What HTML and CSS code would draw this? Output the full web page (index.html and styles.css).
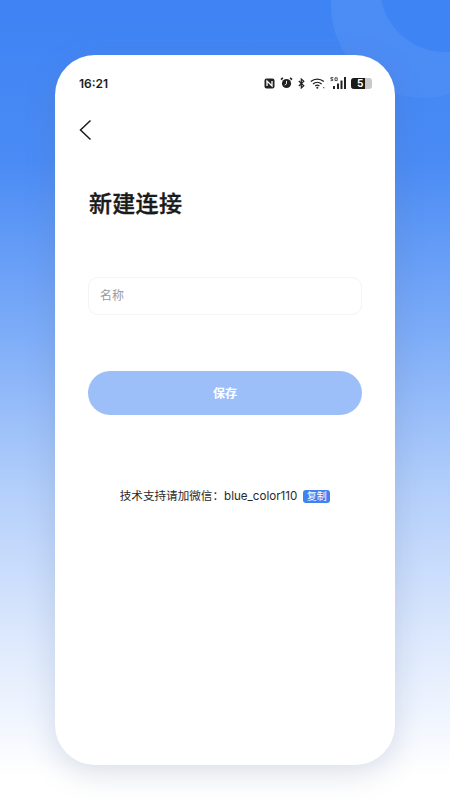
FILE: index.html
```html
<!DOCTYPE html>
<html lang="zh">
<head>
<meta charset="utf-8">
<title>新建连接</title>
<link rel="stylesheet" href="styles.css">
</head>
<body>
<div class="stage">
  <div class="ring-outer"></div>
  <div class="ring-inner"></div>
  <main class="phone">
    <header class="status">
      <span class="time">16:21</span>
      <div class="status-icons">
        <svg class="ic" width="11" height="11" viewBox="0 0 11 11"><rect x="0.5" y="0.5" width="10" height="10" rx="2" fill="#222"/><path d="M3 8V3l5 5V3" fill="none" stroke="#fff" stroke-width="1.3"/></svg>
        <svg class="ic" width="13" height="12" viewBox="0 0 13 12"><circle cx="6.5" cy="6.5" r="4.6" fill="#222"/><path d="M6.5 3.900v2.900l-1.800 1.200" fill="none" stroke="#fff" stroke-width=".9"/><path d="M1 2.600 2.900.8M12 2.600 10.100.8" stroke="#222" stroke-width="1.600"/></svg>
        <svg class="ic" width="7" height="11" viewBox="0 0 7 11"><path d="M.8 3 5.800 7.800 3.300 10V1L5.800 3.200.8 8" fill="none" stroke="#222" stroke-width="1.200"/></svg>
        <svg class="ic" width="15" height="11" viewBox="0 0 15 11"><path d="M.8 3.600C4.500.3 10 .3 13.800 3.600M3 5.900C5.500 3.800 9.100 3.800 11.600 5.900M5.200 8C6.500 7 8.100 7 9.400 8" fill="none" stroke="#222" stroke-width="1.300"/><circle cx="7.300" cy="9.700" r="1" fill="#222"/><circle cx="13.800" cy="9.700" r=".6" fill="#222"/></svg>
        <svg class="ic" width="16" height="12" viewBox="0 0 16 12"><rect x="3" y="9" width="2" height="3" fill="#222"/><rect x="7" y="6.500" width="2" height="5.500" fill="#222"/><rect x="10.500" y="3.500" width="2" height="8.500" fill="#222"/><rect x="14" y="0" width="2" height="12" fill="#222"/><path d="M3.300.6H.9v1.500h1.800v1.500H.7M5 .8h2.200v2.800H5z" fill="none" stroke="#222" stroke-width=".8"/></svg>
        <div class="battery"><div class="battery-fill"></div><span class="battery-num">5</span></div>
      </div>
    </header>
    <svg class="back" width="13" height="22" viewBox="0 0 13 22"><path d="M11.500 1.500 1.500 11l10 9.500" fill="none" stroke="#1c1c1c" stroke-width="1.500"/></svg>
    <h1 class="title">新建连接</h1>
    <div class="field">名称</div>
    <button class="save">保存</button>
    <p class="support">
      <span>技术支持请加微信：blue_color110</span>
      <span class="copy">复制</span>
    </p>
  </main>
</div>
</body>
</html>
```

FILE: styles.css
```css
* { box-sizing: border-box; }
html, body { margin: 0; padding: 0; }
body {
  width: 450px;
  height: 800px;
  overflow: hidden;
  font-family: Inter, "Noto Sans CJK SC", sans-serif;
}
.stage {
  position: relative;
  width: 450px;
  height: 800px;
  padding: 55px 55px 0;
  overflow: hidden;
  background: linear-gradient(180deg, #3e83f4 0%, #4a8bf5 20%, #7eadf8 42%, #b5d0fb 62%, #dde9fd 80%, #ffffff 97%);
}
.ring-outer {
  position: absolute;
  left: 331px;
  top: -88px;
  width: 186px;
  height: 186px;
  border-radius: 50%;
  background: #4c8cf5;
}
.ring-inner {
  position: absolute;
  left: 380px;
  top: -78px;
  width: 130px;
  height: 130px;
  border-radius: 50%;
  background: #3f84f4;
}
.phone {
  position: relative;
  display: flex;
  flex-direction: column;
  width: 340px;
  height: 710px;
  padding: 0 33px;
  background: #fff;
  border-radius: 40px;
  box-shadow: 0 8px 30px rgba(90, 110, 150, 0.22);
}
.status {
  display: flex;
  align-items: center;
  justify-content: space-between;
  height: 14px;
  margin: 21px -10px 0 -9px;
}
.time {
  font-size: 12px;
  font-weight: 600;
  color: #1c1c1c;
}
.status-icons {
  display: flex;
  align-items: center;
  gap: 5px;
}
.ic { display: block; }
.battery {
  position: relative;
  width: 21px;
  height: 11px;
  background: #c9c9c9;
  border-radius: 3px;
  overflow: hidden;
}
.battery-fill {
  width: 14px;
  height: 11px;
  background: #1a1a1a;
}
.battery-num {
  position: absolute;
  left: 6px;
  top: 0;
  font-size: 10px;
  line-height: 11px;
  font-weight: 700;
  color: #fff;
}
.back {
  display: block;
  margin: 29px 0 0 -9px;
}
.title {
  margin: 47px 0 0 1px;
  font-size: 23px;
  line-height: 32px;
  font-weight: 500;
  letter-spacing: 0.300px;
  color: #1a1a1a;
  -webkit-text-stroke: 0.400px #1a1a1a;
}
.field {
  height: 38px;
  margin-top: 57px;
  padding-left: 11px;
  font-size: 12px;
  line-height: 36px;
  color: #9a9a9a;
  border: 1px solid #f4f4f6;
  border-radius: 10px;
}
.save {
  display: block;
  width: 100%;
  height: 44px;
  margin-top: 56px;
  padding: 0 0 2px;
  border: 0;
  border-radius: 22px;
  background: #9cbff9;
  color: #fff;
  font: 700 12px Inter, "Noto Sans CJK SC", sans-serif;
}
.support {
  display: flex;
  align-items: center;
  justify-content: center;
  gap: 6px;
  margin: 73px 0 0;
  font-size: 11.600px;
  line-height: 16px;
  color: #2a2a2a;
  white-space: nowrap;
}
.copy {
  padding: 0 3.500px;
  font-size: 10px;
  line-height: 13px;
  color: #fff;
  background: #3f83ee;
  border-radius: 3px;
}
```
